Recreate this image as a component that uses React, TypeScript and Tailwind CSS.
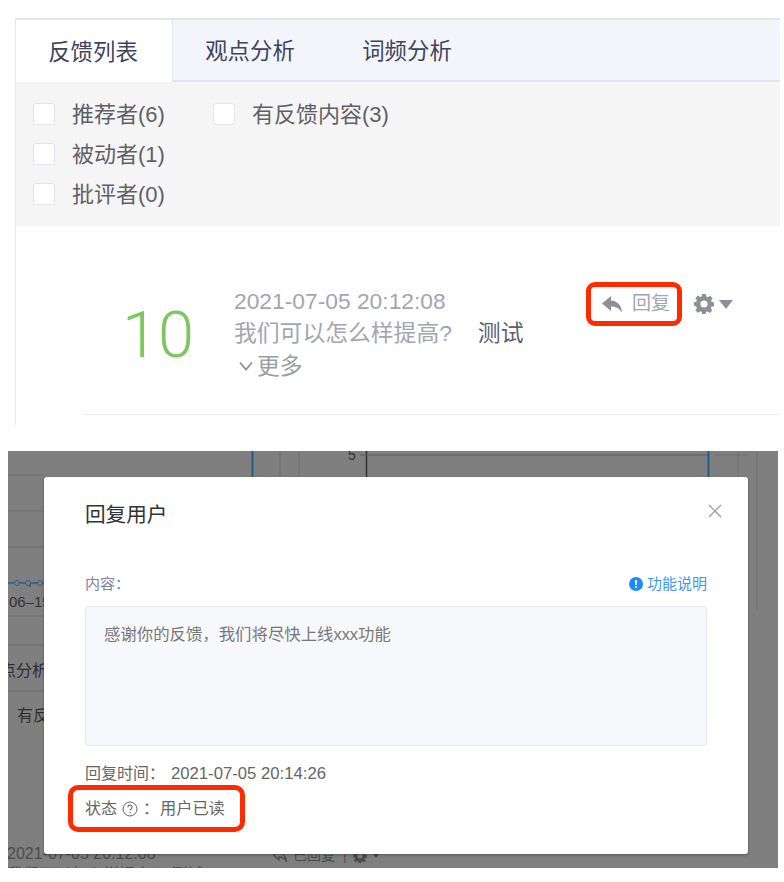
const sans = { fontFamily: '"Liberation Sans", "Noto Sans CJK SC", sans-serif' };

function Check({ label }: { label: string }) {
  return (
    <div className="flex h-[40px] items-center">
      <span className="h-[22px] w-[22px] rounded-[3px] border border-[#e3e5ec] bg-white" />
      <span className="ml-[17px] text-[22px] text-[#5f6068]">{label}</span>
    </div>
  );
}

function Gear() {
  return (
    <svg width="20" height="20" viewBox="0 0 20 20" fill="#8d8f9a">
      <path fillRule="evenodd" d="M8.2 0h3.6l.5 2.6 1.5.7 2.3-1.5 2.5 2.5-1.5 2.3.7 1.5 2.2.5v3.6l-2.6.5-.6 1.5 1.5 2.3-2.5 2.5-2.3-1.5-1.5.6-.5 2.4H8.2l-.5-2.6-1.5-.6-2.3 1.5-2.5-2.5 1.5-2.3-.7-1.5L0 11.8V8.2l2.2-.5.7-1.5-1.5-2.3 2.5-2.5 2.3 1.5 1.5-.7zM10 6.4a3.6 3.6 0 1 0 0 7.2 3.6 3.6 0 0 0 0-7.2z" />
    </svg>
  );
}

function Backdrop() {
  return (
    <>
      <svg className="absolute inset-0" width="770" height="417" viewBox="0 0 770 417" fill="none">
        <path d="M0 24H36M0 60H36M0 96H36M0 165H36M0 194H36M0 240H36" stroke="#707070" />
        <path d="M740 4H707M272 0V26M291 0V26M730 0V26M749 0V160" stroke="#707070" />
        <path d="M358.500 0V26" stroke="#2c2c2c" strokeWidth="1.4" />
        <path d="M352 4H700" stroke="#5f5f5f" />
        <path d="M244.500 0V26M700.500 0V26" stroke="#1f5f86" strokeWidth="2" />
        <path d="M0 132H36" stroke="#2a6285" strokeWidth="1.5" />
        <path d="M22 132v4" stroke="#2c2c2c" />
        <circle cx="9" cy="132" r="2.500" fill="#7f7f7f" stroke="#2a6285" />
        <circle cx="20" cy="132" r="2.500" fill="#7f7f7f" stroke="#2a6285" />
        <circle cx="32" cy="132" r="2.500" fill="#7f7f7f" stroke="#2a6285" />
      </svg>
      <span className="absolute left-[340px] top-[-6px] text-[14px] text-[#333333]">5</span>
      <span className="absolute left-[1px] top-[140px] text-[15px] text-[#333333]">06–15</span>
      <span className="absolute left-[-8px] top-[208px] w-[44px] overflow-hidden whitespace-nowrap text-[16px] text-[#2c2e38]">点分析</span>
      <span className="absolute left-[9px] top-[253px] w-[27px] overflow-hidden whitespace-nowrap text-[16px] text-[#2f2f2f]">有反</span>
      <span className="absolute left-[-1px] top-[391px] text-[16px] text-[#4c4c4c]">2021-07-05 20:12:08</span>
      <span className="absolute left-[-1px] top-[412px] whitespace-nowrap text-[16px] text-[#4c4c4c]">我们可以怎么样提高？ 测试</span>
      <span className="absolute left-[265px] top-[394px] flex items-center text-[14px] text-[#4c4c4c]">
        <svg width="14" height="12" viewBox="0 0 21 17" fill="none" stroke="#4c4c4c" strokeWidth="2"><path d="M9 1L1 7.500 9 14v-4c4.500 0 8 1.500 11 6C19.500 9.500 15.500 5 9 4.500z" /></svg>
        <span className="ml-[6px]">已回复</span>
        <span className="ml-[8px] text-[#555555]">|</span>
        <svg className="ml-[6px]" width="14" height="14" viewBox="0 0 20 20" fill="#4c4c4c"><path fillRule="evenodd" d="M8.2 0h3.6l.5 2.6 1.5.7 2.3-1.5 2.500 2.500-1.500 2.300.7 1.500 2.200.5v3.600l-2.600.5-.6 1.500 1.500 2.300-2.500 2.500-2.300-1.500-1.500.6-.5 2.400H8.200l-.5-2.600-1.500-.6-2.300 1.500-2.500-2.500 1.500-2.300-.7-1.500L0 11.800V8.200l2.200-.5.7-1.500-1.500-2.300 2.500-2.500 2.300 1.500 1.500-.7zM10 6.400a3.600 3.600 0 1 0 0 7.200 3.600 3.600 0 0 0 0-7.200z" /></svg>
        <svg className="ml-[5px]" width="8" height="5" viewBox="0 0 14 9" fill="#4c4c4c"><path d="M0 0h14L7 9z" /></svg>
      </span>
    </>
  );
}

export default function App() {
  return (
    <div className="relative h-[882px] w-[784px] overflow-hidden bg-white pt-[18px]" style={sans}>
      <section className="ml-[15px] h-[407px] w-[765px] border-l border-l-[#e4e6ee]">
        <div className="flex h-[64px] border-y-2 border-[#e4e6ee] bg-[#f3f5fa] text-[22.400px] text-[#40445c]">
          <div className="mb-[-2px] flex w-[157px] items-center justify-center border-r border-[#e4e6ee] bg-white pr-[2px] pt-[3px]">反馈列表</div>
          <div className="flex w-[157px] items-center justify-center pr-[3px] pt-[3px]">观点分析</div>
          <div className="flex w-[157px] items-center justify-center pr-[3px] pt-[3px]">词频分析</div>
        </div>
        <div className="flex h-[144px] gap-[48px] bg-[#f5f5f5] pl-[17px] pt-[12px]">
          <div className="flex flex-col">
            <Check label="推荐者(6)" />
            <Check label="被动者(1)" />
            <Check label="批评者(0)" />
          </div>
          <Check label="有反馈内容(3)" />
        </div>
        <div className="ml-[66px] flex h-[189px] border-b border-[#ececf0] pt-[59px]">
          <div className="w-[152px] pl-[40px] pt-[10px] text-[65px] font-light leading-[80px] text-[#7ec65f]" style={{ fontFamily: 'Roboto, sans-serif' }}>10</div>
          <div className="w-[352px] text-[22.800px] leading-[32px] text-[#a2a5b4]">
            <div>2021-07-05 20:12:08</div>
            <div className="flex">
              <span>我们可以怎么样提高?</span>
              <span className="ml-[26px] text-[#5b5f73]">测试</span>
            </div>
            <div className="mt-[1px] flex items-center text-[#9b9da9]">
              <svg className="ml-[4px]" width="16" height="10" viewBox="0 0 16 10" fill="none" stroke="#8e909c" strokeWidth="1.800"><path d="M2 1.500l6 7 6-7" /></svg>
              <span className="ml-[3px]">更多</span>
            </div>
          </div>
          <div className="mt-[-3px] flex h-[44px] w-[96px] items-center gap-[9px] rounded-[9px] border-[5px] border-[#ff2a00] pl-[11px] text-[19px] text-[#a2a5b4]">
            <svg width="21" height="17" viewBox="0 0 21 17" fill="#8d8f9a"><path d="M9 0L0 7.500 9 15v-4.500c4.500 0 8 1.500 11 6C19.500 9.500 15.500 5 9 4.500z" /></svg>
            <span>回复</span>
          </div>
          <div className="ml-[12px] mt-[9px] flex h-[20px] items-center gap-[5px]">
            <Gear />
            <svg width="14" height="9" viewBox="0 0 14 9" fill="#8d8f9a"><path d="M0 0h14L7 9z" /></svg>
          </div>
        </div>
      </section>

      <section className="relative ml-[8px] mt-[26px] h-[417px] w-[770px] overflow-hidden bg-[#7f7f7f] pl-[36px] pt-[26px]">
        <Backdrop />
        <div className="relative h-[377px] w-[704px] rounded-[3px] bg-white px-[41px] shadow-[0_1px_3px_rgba(0,0,0,0.3)]">
          <div className="flex h-[74px] items-center justify-between">
            <span className="mt-[2px] text-[20.600px] text-[#333333]">回复用户</span>
            <svg className="mb-[7px] mr-[-15px]" width="14" height="14" viewBox="0 0 14 14" fill="none" stroke="#9a9a9a" strokeWidth="1.200"><path d="M1 1l12 12M13 1L1 13" /></svg>
          </div>
          <div className="mt-[21px] flex h-[24px] items-center justify-between text-[15px]">
            <span className="text-[#7e84a3]">内容：</span>
            <span className="flex items-center gap-[4px] text-[#3d97f5]">
              <svg width="14" height="14" viewBox="0 0 14 14"><circle cx="7" cy="7" r="7" fill="#1a8cff" /><path d="M6 3h2l-.3 5H6.300zM6.100 9.200h1.800V11H6.100z" fill="#fff" /></svg>
              功能说明
            </span>
          </div>
          <div className="mt-[10px] h-[140px] rounded-[4px] border border-[#e6e8ef] bg-[#f7f8fb] px-[18px] pt-[15px] text-[16.400px] leading-[24px] text-[#777777]">
            感谢你的反馈，我们将尽快上线xxx功能
          </div>
          <div className="mt-[17px] flex h-[22px] items-center text-[16px] text-[#666666]">
            <span className="w-[86px]">回复时间：</span>
            <span className="text-[16.700px]">2021-07-05 20:14:26</span>
          </div>
          <div className="ml-[-17px] mt-[0px] flex h-[47px] w-[177px] items-center rounded-[10px] border-[5px] border-[#ff2a00] pl-[12px] text-[16px] text-[#666666]">
            <span>状态</span>
            <svg className="ml-[5px]" width="16" height="16" viewBox="0 0 16 16" fill="none" stroke="#666666"><circle cx="8" cy="8" r="7" /><path d="M5.900 6.200a2.100 2.100 0 1 1 3.100 1.800c-.7.400-1 .8-1 1.600" strokeWidth="1.100" /><path d="M8 11v1.200" strokeWidth="1.200" /></svg>
            <span className="ml-[5px] w-[17px]">：</span>
            <span className="text-[16.200px]">用户已读</span>
          </div>
        </div>
      </section>
    </div>
  );
}
